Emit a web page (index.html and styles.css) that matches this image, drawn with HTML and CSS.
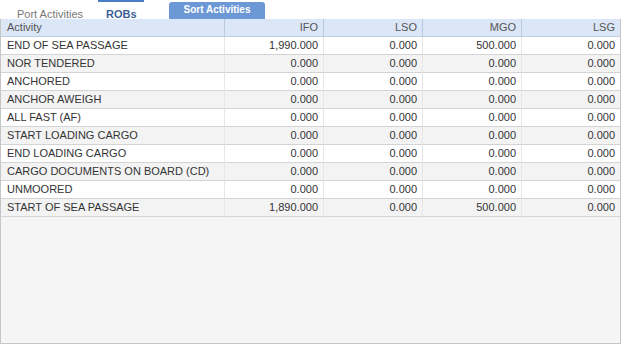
FILE: index.html
```html
<!DOCTYPE html>
<html>
<head>
<meta charset="utf-8">
<link rel="stylesheet" href="styles.css">
</head>
<body>
<div class="tabs">
  <div class="tab">Port Activities</div>
  <div class="tab active">ROBs</div>
  <div class="btn">Sort Activities</div>
</div>
<div class="grid">
  <table>
    <colgroup>
      <col class="c-act"><col class="c-num"><col class="c-num"><col class="c-num"><col class="c-last">
    </colgroup>
    <thead>
      <tr><th class="left">Activity</th><th>IFO</th><th>LSO</th><th>MGO</th><th>LSG</th></tr>
    </thead>
    <tbody>
      <tr><td class="left">END OF SEA PASSAGE</td><td>1,990.000</td><td>0.000</td><td>500.000</td><td>0.000</td></tr>
      <tr><td class="left">NOR TENDERED</td><td>0.000</td><td>0.000</td><td>0.000</td><td>0.000</td></tr>
      <tr><td class="left">ANCHORED</td><td>0.000</td><td>0.000</td><td>0.000</td><td>0.000</td></tr>
      <tr><td class="left">ANCHOR AWEIGH</td><td>0.000</td><td>0.000</td><td>0.000</td><td>0.000</td></tr>
      <tr><td class="left">ALL FAST (AF)</td><td>0.000</td><td>0.000</td><td>0.000</td><td>0.000</td></tr>
      <tr><td class="left">START LOADING CARGO</td><td>0.000</td><td>0.000</td><td>0.000</td><td>0.000</td></tr>
      <tr><td class="left">END LOADING CARGO</td><td>0.000</td><td>0.000</td><td>0.000</td><td>0.000</td></tr>
      <tr><td class="left">CARGO DOCUMENTS ON BOARD (CD)</td><td>0.000</td><td>0.000</td><td>0.000</td><td>0.000</td></tr>
      <tr><td class="left">UNMOORED</td><td>0.000</td><td>0.000</td><td>0.000</td><td>0.000</td></tr>
      <tr><td class="left">START OF SEA PASSAGE</td><td>1,890.000</td><td>0.000</td><td>500.000</td><td>0.000</td></tr>
    </tbody>
  </table>
</div>
</body>
</html>
```
FILE: styles.css
```css
html, body {
  margin: 0;
  padding: 0;
  background: #ffffff;
}
body {
  font-family: "Liberation Sans", Arial, sans-serif;
  font-size: 11px;
  color: #333333;
  width: 621px;
  height: 344px;
  overflow: hidden;
}
.tabs {
  display: flex;
  align-items: flex-end;
  height: 19px;
  padding-left: 8px;
}
.tab {
  box-sizing: border-box;
  height: 19px;
  padding: 6px 9px 0;
  color: #777777;
  font-size: 11px;
  border-top: 2px solid transparent;
}
.tab.active {
  color: #3d5f96;
  font-weight: bold;
  border-top: 2px solid #4a7bc6;
  width: 46px;
  margin-left: 6px;
  padding-left: 8px;
}
.btn {
  box-sizing: border-box;
  margin-left: 25px;
  width: 96px;
  height: 17px;
  background: #6c98d6;
  color: #ffffff;
  font-weight: bold;
  font-size: 10px;
  text-align: center;
  line-height: 16px;
  border-radius: 3px 3px 0 0;
}
.grid {
  box-sizing: border-box;
  height: 325px;
  background: #f5f5f5;
  border: 1px solid #c6c6c6;
  border-top: none;
}
table {
  width: 619px;
  table-layout: fixed;
  border-collapse: separate;
  border-spacing: 0;
}
.c-act { width: 224px; }
.c-num { width: 99px; }
.c-last { width: 98px; }
th, td {
  height: 17px;
  padding: 0 5px 0 6px;
  border-bottom: 1px solid #d4d4d4;
  text-align: right;
  white-space: nowrap;
  overflow: hidden;
  line-height: 17px;
}
th {
  background: #dbe6f6;
  color: #555555;
  font-weight: normal;
  border-bottom: 1px solid #c2cfe0;
  border-right: 1px solid #b9c9df;
}
th:last-child { border-right: none; }
.left { text-align: left; }
tbody tr:nth-child(odd) td { background: #ffffff; }
tbody tr:nth-child(even) td { background: #f3f3f3; }
td {
  border-right: 1px solid #e6e6e6;
}
td:last-child { border-right: none; }
```
